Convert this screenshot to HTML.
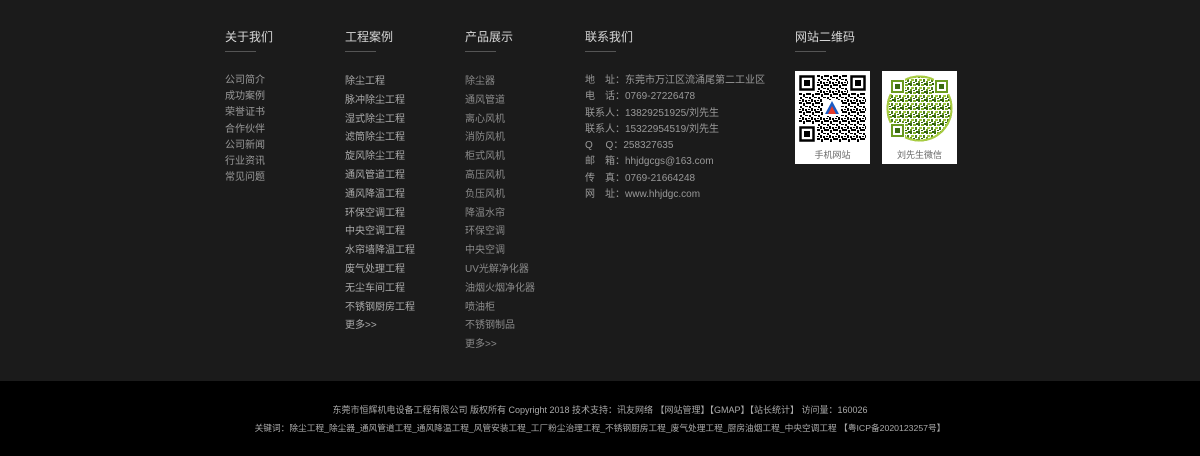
<!DOCTYPE html>
<html><head><meta charset="utf-8"><style>
*{margin:0;padding:0;box-sizing:border-box}
body{width:1200px;height:456px;background:#1b1b1b;font-family:"Liberation Sans","Noto Sans CJK SC",sans-serif;position:relative;overflow:hidden}
.col{position:absolute;top:30px}
.t{color:#d6d6d6;font-size:12px;line-height:14px;height:14px}
.ln{width:31px;height:1px;background:#555;margin-top:7px}
.l a{display:block;color:#999;font-size:10px;white-space:nowrap}
.c1{position:absolute}
.c1 a{line-height:16.2px}
.c2 a{line-height:18.8px;color:#aaa}
.c3 a{line-height:18.8px;color:#8a8a8a}
.c4 a{line-height:16.3px;color:#999}
.qr{position:absolute;top:71px;width:75px;height:93px;background:#fff}
.qr span{position:absolute;bottom:3px;left:0;width:100%;text-align:center;font-size:9px;color:#666}
.qr svg{position:absolute;left:4px;top:4px}
.bot{position:absolute;left:0;top:381px;width:1200px;height:75px;background:#000;color:#aaa;text-align:center}
.bot p{position:absolute;width:100%;white-space:nowrap}
</style></head><body>
<svg width="0" height="0" style="position:absolute"><defs>
<pattern id="p" width="9" height="9" patternUnits="userSpaceOnUse">
<rect x="0" y="0" width="3" height="2"/><rect x="4" y="1" width="2" height="3"/><rect x="7" y="0" width="2" height="2"/><rect x="1" y="4" width="2" height="2"/><rect x="6" y="4" width="3" height="1"/><rect x="3" y="6" width="2" height="3"/><rect x="0" y="7" width="2" height="1"/><rect x="6" y="7" width="2" height="2"/>
</pattern>
<pattern id="g" width="8" height="8" patternUnits="userSpaceOnUse">
<rect x="0" y="0" width="2" height="3" fill="#3a6a10"/><rect x="3" y="1" width="3" height="2" fill="#7fae2a"/><rect x="6" y="0" width="2" height="2" fill="#2e5c0c"/><rect x="1" y="4" width="3" height="2" fill="#9cc43c"/><rect x="5" y="4" width="2" height="3" fill="#4a7a18"/><rect x="0" y="6" width="2" height="2" fill="#6a9a20"/><rect x="3" y="7" width="2" height="1" fill="#2e5c0c"/>
</pattern></defs></svg>

<div class="col" style="left:225px"><div class="t">关于我们</div><div class="ln"></div></div>
<div class="l c1" style="left:225px;top:73px"><a>公司简介</a><a>成功案例</a><a>荣誉证书</a><a>合作伙伴</a><a>公司新闻</a><a>行业资讯</a><a>常见问题</a></div>

<div class="col" style="left:345px"><div class="t">工程案例</div><div class="ln"></div></div>
<div class="l c1 c2" style="left:345px;top:73px"><a>除尘工程</a><a>脉冲除尘工程</a><a>湿式除尘工程</a><a>滤筒除尘工程</a><a>旋风除尘工程</a><a>通风管道工程</a><a>通风降温工程</a><a>环保空调工程</a><a>中央空调工程</a><a>水帘墙降温工程</a><a>废气处理工程</a><a>无尘车间工程</a><a>不锈钢厨房工程</a><a>更多&gt;&gt;</a></div>

<div class="col" style="left:465px"><div class="t">产品展示</div><div class="ln"></div></div>
<div class="l c1 c3" style="left:465px;top:73px"><a>除尘器</a><a>通风管道</a><a>离心风机</a><a>消防风机</a><a>柜式风机</a><a>高压风机</a><a>负压风机</a><a>降温水帘</a><a>环保空调</a><a>中央空调</a><a>UV光解净化器</a><a>油烟火烟净化器</a><a>喷油柜</a><a>不锈钢制品</a><a>更多&gt;&gt;</a></div>

<div class="col" style="left:585px"><div class="t">联系我们</div><div class="ln"></div></div>
<div class="l c1 c4" style="left:585px;top:73px"><a>地　址：东莞市万江区流涌尾第二工业区</a><a>电　话：0769-27226478</a><a>联系人：13829251925/刘先生</a><a>联系人：15322954519/刘先生</a><a>Q　 Q：258327635</a><a>邮　箱：hhjdgcgs@163.com</a><a>传　真：0769-21664248</a><a>网　址：www.hhjdgc.com</a></div>

<div class="col" style="left:795px"><div class="t">网站二维码</div><div class="ln"></div></div>
<div class="qr" style="left:795px"><svg width="67" height="67" viewBox="0 0 67 67"><rect width="67" height="67" fill="url(#p)"/><g fill="#fff"><rect width="18" height="18"/><rect x="49" width="18" height="18"/><rect y="49" width="18" height="18"/><rect x="24" y="25" width="18" height="16"/></g><g fill="none" stroke="#000" stroke-width="2.5"><rect x="1.5" y="1.5" width="13" height="13"/><rect x="52.5" y="1.5" width="13" height="13"/><rect x="1.5" y="52.5" width="13" height="13"/></g><rect x="5" y="5" width="6" height="6"/><rect x="56" y="5" width="6" height="6"/><rect x="5" y="56" width="6" height="6"/><path d="M26 39 L33 26 L40 39 Z" fill="#1a5bc4"/><path d="M29 39 L33 31 L37 39Z" fill="#e63a2a"/></svg><span>手机网站</span></div>
<div class="qr" style="left:882px"><svg width="67" height="67" viewBox="0 0 67 67"><circle cx="33.5" cy="33.5" r="33" fill="url(#g)"/><circle cx="33.5" cy="33.5" r="32" fill="none" stroke="#a8cc40" stroke-width="2"/><g fill="#fff"><rect x="4" y="4" width="15" height="15"/><rect x="48" y="4" width="15" height="15"/><rect x="4" y="48" width="15" height="15"/></g><g fill="none" stroke="#6a9a20" stroke-width="2"><rect x="6" y="6" width="11" height="11"/><rect x="50" y="6" width="11" height="11"/><rect x="6" y="50" width="11" height="11"/></g><g fill="#3a6a10"><rect x="9" y="9" width="5" height="5"/><rect x="53" y="9" width="5" height="5"/><rect x="9" y="53" width="5" height="5"/></g></svg><span>刘先生微信</span></div>

<div class="bot">
<p style="top:22px;font-size:9px">东莞市恒辉机电设备工程有限公司 版权所有 Copyright 2018 技术支持：讯友网络 【网站管理】【GMAP】【站长统计】 访问量：160026</p>
<p style="top:40px;font-size:8.7px">关键词：除尘工程_除尘器_通风管道工程_通风降温工程_风管安装工程_工厂粉尘治理工程_不锈钢厨房工程_废气处理工程_厨房油烟工程_中央空调工程 【粤ICP备2020123257号】</p>
</div>
</body></html>
